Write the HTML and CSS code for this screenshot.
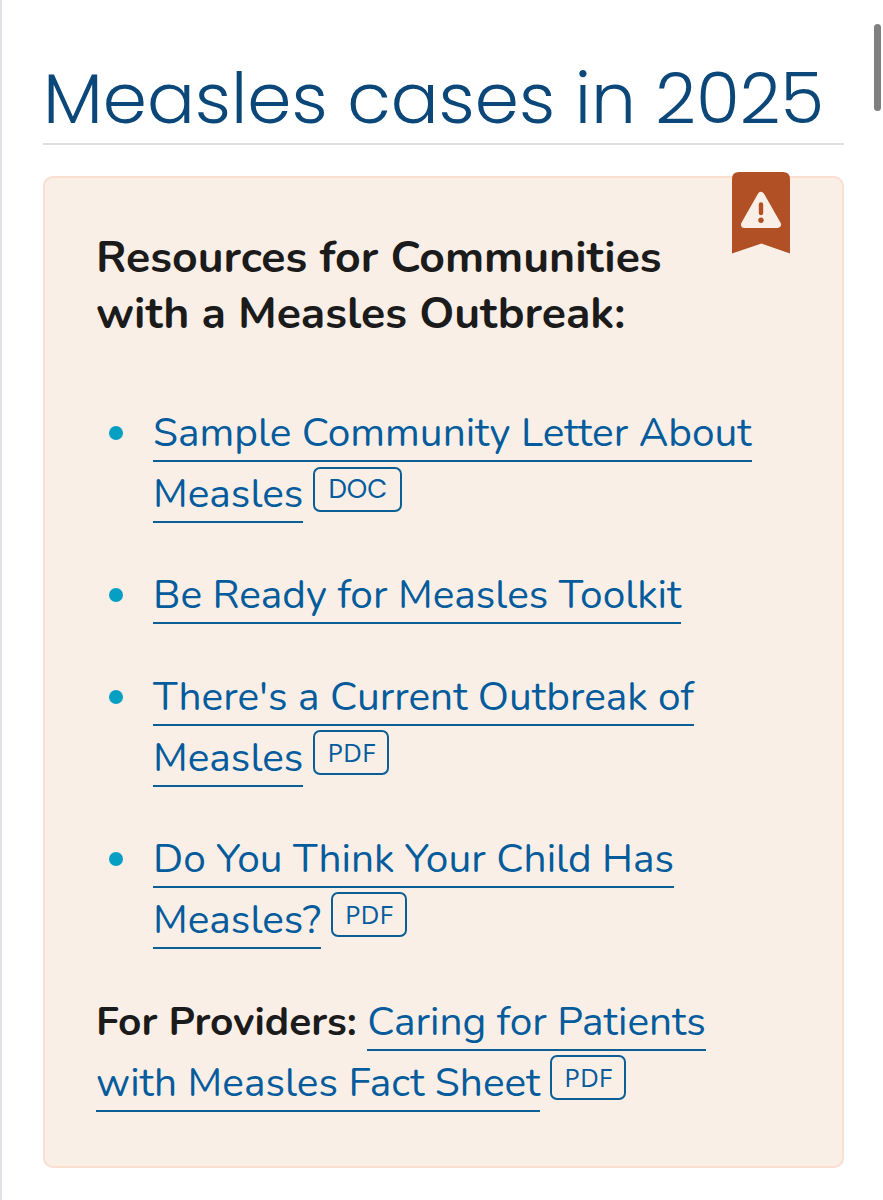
FILE: index.html
```
<!doctype html>
<html lang="en">
  <head>
    <meta charset="UTF-8" />
    <meta name="viewport" content="width=device-width, initial-scale=1.0" />
    <title>Measles cases in 2025</title>
    <link rel="stylesheet" href="styles.css">
  </head>
  <body>
    <div class="scrollbar"></div>
    <main class="page">
      <h1 class="title">Measles cases in 2025</h1>
      <section class="callout">
        <svg class="ribbon" width="58" height="82" viewBox="0 0 58 82">
          <path d="M0 81.500V7Q0 0 7 0H51Q58 0 58 7V81.500L29.500 71.500Z" fill="#b15024" />
          <path d="M29 23.500L45.500 52.500H12.500Z" fill="#faefe7" stroke="#faefe7" stroke-width="7" stroke-linejoin="round" />
          <path d="M29 32.500V41" stroke="#b15024" stroke-width="4.400" stroke-linecap="round" />
          <circle cx="29" cy="48.300" r="2.700" fill="#b15024" />
        </svg>
        <h2 class="heading">
          Resources for Communities<br />
          with a Measles Outbreak:
        </h2>
        <ul class="links">
          <li>
            <div>
              <a class="link" href="#">Sample Community Letter About<br />Measles</a><span class="badge doc">DOC</span>
            </div>
          </li>
          <li>
            <div><a class="link" href="#">Be Ready for Measles Toolkit</a></div>
          </li>
          <li>
            <div>
              <a class="link" href="#">There's a Current Outbreak of<br />Measles</a><span class="badge">PDF</span>
            </div>
          </li>
          <li>
            <div>
              <a class="link" href="#">Do You Think Your Child Has<br />Measles?</a><span class="badge">PDF</span>
            </div>
          </li>
        </ul>
        <p class="providers">
          <strong>For Providers:</strong>
          <a class="link" href="#">Caring for Patients<br />with Measles Fact Sheet</a><span class="badge">PDF</span>
        </p>
      </section>
    </main>
  </body>
</html>
```
FILE: styles.css
```
* {
  box-sizing: border-box;
}
body {
  margin: 0;
  min-height: 1200px;
  border-left: 2px solid #e1e1e6;
  background: #fff;
  color: #1b1b1b;
  font-family: Nunito, Lato, sans-serif;
  font-size: 40.62px;
  line-height: 61px;
}
.scrollbar {
  position: absolute;
  top: 24px;
  right: 2px;
  width: 7px;
  height: 87px;
  border-radius: 4px;
  background: #808080;
}
.page {
  padding: 49px 39px 0 41px;
}
.title {
  margin: 0 0 31px;
  height: 96px;
  border-bottom: 2px solid #dfdfe1;
  color: #0b4778;
  font-family: Poppins, Inter, sans-serif;
  font-size: 71px;
  font-weight: 300;
  line-height: 98px;
  white-space: nowrap;
}
.callout {
  position: relative;
  height: 992px;
  padding: 51.6px 49px 0 51px;
  border: 2px solid #f9dfd0;
  border-radius: 10px;
  background: #faefe7;
}
/* bookmark hangs over the top edge of the callout */
.ribbon {
  position: absolute;
  top: -6px;
  right: 52px;
}
.heading {
  margin: 0 0 59px;
  font-size: 44.65px;
  line-height: 56.5px;
  white-space: nowrap;
}
.links {
  margin: 0;
  padding: 0;
  list-style: none;
}
.links li {
  display: flex;
  margin-bottom: 40.6px;
}
.links li::before {
  content: "";
  flex: none;
  width: 14px;
  height: 14px;
  margin: 24px 30px 0 13px;
  border-radius: 50%;
  background: #049fc3;
}
.link {
  border-bottom: 2px solid #0b5f94;
  color: #045c9c;
  text-decoration: none;
  white-space: nowrap;
}
.badge {
  display: inline-block;
  width: 76px;
  height: 45px;
  margin-left: 10px;
  border: 2px solid #0b5f94;
  border-radius: 7px;
  color: #045c9c;
  font-family: "Open Sans", sans-serif;
  font-size: 26px;
  line-height: 41px;
  text-align: center;
  vertical-align: 9px;
}
.doc {
  width: 89px;
  font-family: Poppins, Inter, sans-serif;
}
.providers {
  margin: 0;
}
```
